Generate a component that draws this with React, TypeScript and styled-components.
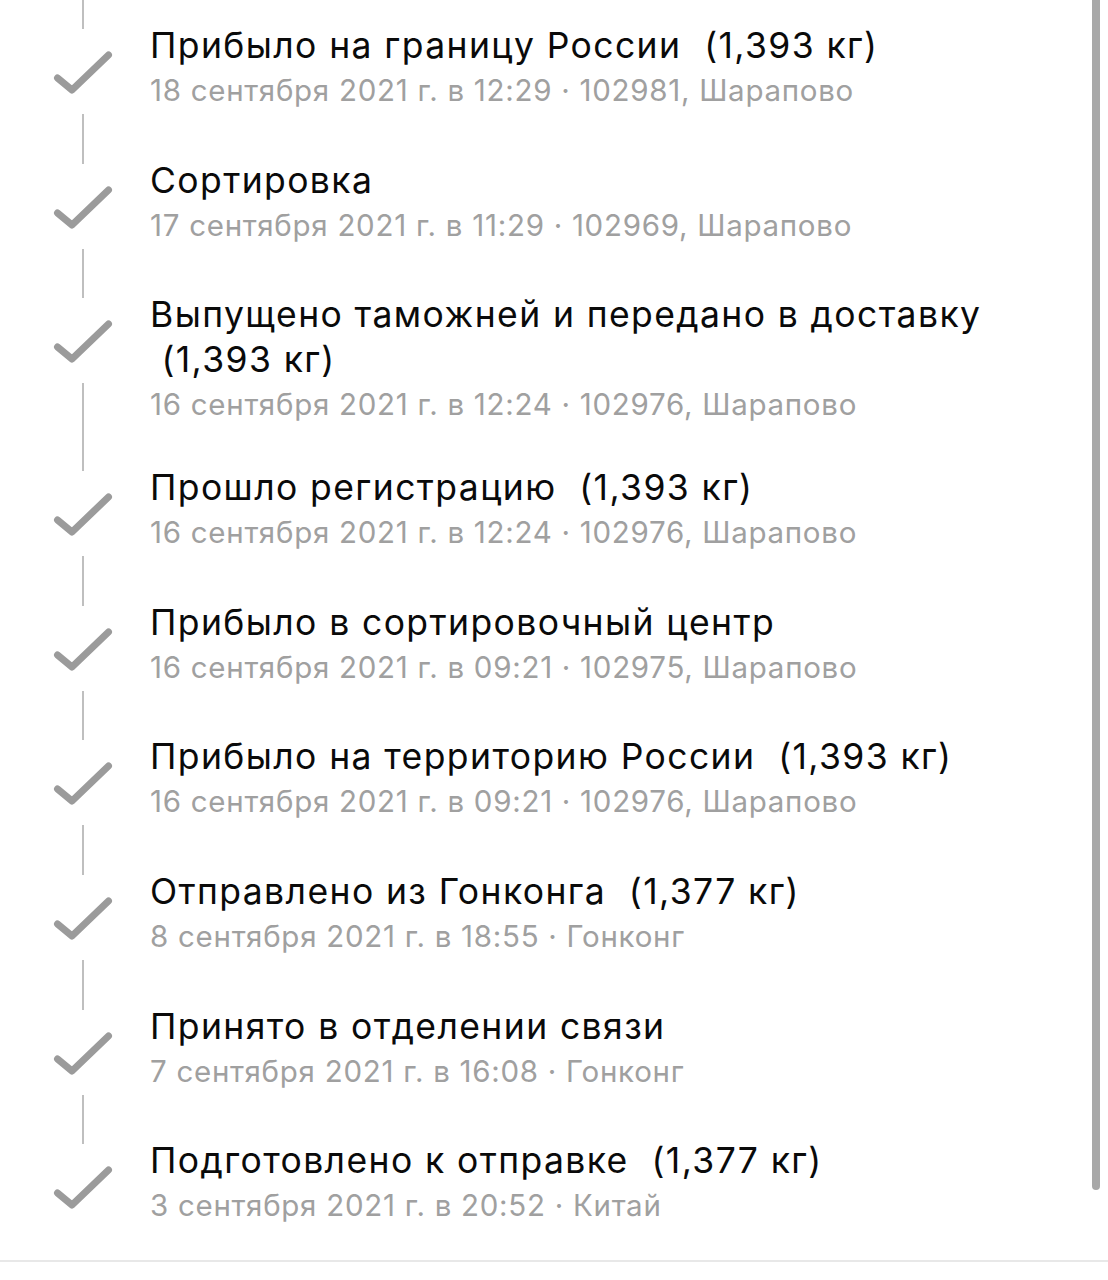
import React from 'react';
import styled, { createGlobalStyle } from 'styled-components';

const GlobalStyle = createGlobalStyle`
  html, body {
    margin: 0;
    padding: 0;
    background: #ffffff;
  }
  body {
    font-family: Inter, "Noto Sans", "Liberation Sans", sans-serif;
    -webkit-font-smoothing: antialiased;
  }
`;

const Screen = styled.div`
  position: relative;
  width: 1108px;
  height: 1280px;
  overflow: hidden;
  background: #ffffff;
`;

const Timeline = styled.div`
  display: flex;
  flex-direction: column;
`;

const Row = styled.div`
  display: grid;
  grid-template-columns: 60px 1fr;
  column-gap: 37px;
  min-height: 134.6px;
  padding-left: 53px;
  box-sizing: border-box;
`;

const Rail = styled.div`
  display: flex;
  flex-direction: column;
  align-items: center;
`;

const RailLine = styled.div<{ $top?: boolean; $hidden?: boolean }>`
  width: 2px;
  background: ${props => (props.$hidden ? 'transparent' : '#bfbfbf')};
  ${props =>
    props.$top
      ? 'height: 29px; margin-bottom: 22px;'
      : 'flex: 1; margin-top: 19px;'}
`;

const CheckSvg = styled.svg`
  display: block;
  width: 60px;
  height: 44px;
  flex-shrink: 0;
`;

const Body = styled.div`
  padding: 23px 24px 15px 0;
  min-width: 0;
`;

const Title = styled.div`
  font-size: 35.5px;
  line-height: 45px;
  letter-spacing: 1.4px;
  color: #0a0a0a;
  white-space: pre-wrap;
`;

const Meta = styled.div`
  font-size: 29.5px;
  line-height: 45px;
  letter-spacing: 0.72px;
  color: #a0a0a0;
  white-space: nowrap;
`;

const Footer = styled.div`
  margin-top: 10px;
  border-top: 2px solid #e8e8e8;
  height: 14px;
`;

const ScrollIndicator = styled.div`
  position: absolute;
  top: -20px;
  right: 8px;
  width: 8px;
  height: 1210px;
  border-radius: 4px;
  background: #a8a8a8;
`;

const Check = () => (
  <CheckSvg viewBox="0 0 60 44">
    <polyline
      points="4.5,27 19,39 55.5,4"
      fill="none"
      stroke="#9b9b9b"
      strokeWidth="7"
      strokeLinecap="round"
      strokeLinejoin="round"
    />
  </CheckSvg>
);

const events = [
  { title: 'Прибыло на границу России', weight: '1,393 кг', meta: '18 сентября 2021 г. в 12:29 · 102981, Шарапово' },
  { title: 'Сортировка', meta: '17 сентября 2021 г. в 11:29 · 102969, Шарапово' },
  { title: 'Выпущено таможней и передано в доставку', weight: '1,393 кг', meta: '16 сентября 2021 г. в 12:24 · 102976, Шарапово' },
  { title: 'Прошло регистрацию', weight: '1,393 кг', meta: '16 сентября 2021 г. в 12:24 · 102976, Шарапово' },
  { title: 'Прибыло в сортировочный центр', meta: '16 сентября 2021 г. в 09:21 · 102975, Шарапово' },
  { title: 'Прибыло на территорию России', weight: '1,393 кг', meta: '16 сентября 2021 г. в 09:21 · 102976, Шарапово' },
  { title: 'Отправлено из Гонконга', weight: '1,377 кг', meta: '8 сентября 2021 г. в 18:55 · Гонконг' },
  { title: 'Принято в отделении связи', meta: '7 сентября 2021 г. в 16:08 · Гонконг' },
  { title: 'Подготовлено к отправке', weight: '1,377 кг', meta: '3 сентября 2021 г. в 20:52 · Китай' },
];

export default function App() {
  return (
    <>
      <GlobalStyle />
      <Screen>
        <Timeline>
          {events.map((ev, i) => (
            <Row key={i}>
              <Rail>
                <RailLine $top />
                <Check />
                <RailLine $hidden={i === events.length - 1} />
              </Rail>
              <Body>
                <Title>
                  {ev.title}
                  {ev.weight ? ` \u00a0(${ev.weight})` : ''}
                </Title>
                <Meta>{ev.meta}</Meta>
              </Body>
            </Row>
          ))}
        </Timeline>
        <Footer />
        <ScrollIndicator />
      </Screen>
    </>
  );
}
